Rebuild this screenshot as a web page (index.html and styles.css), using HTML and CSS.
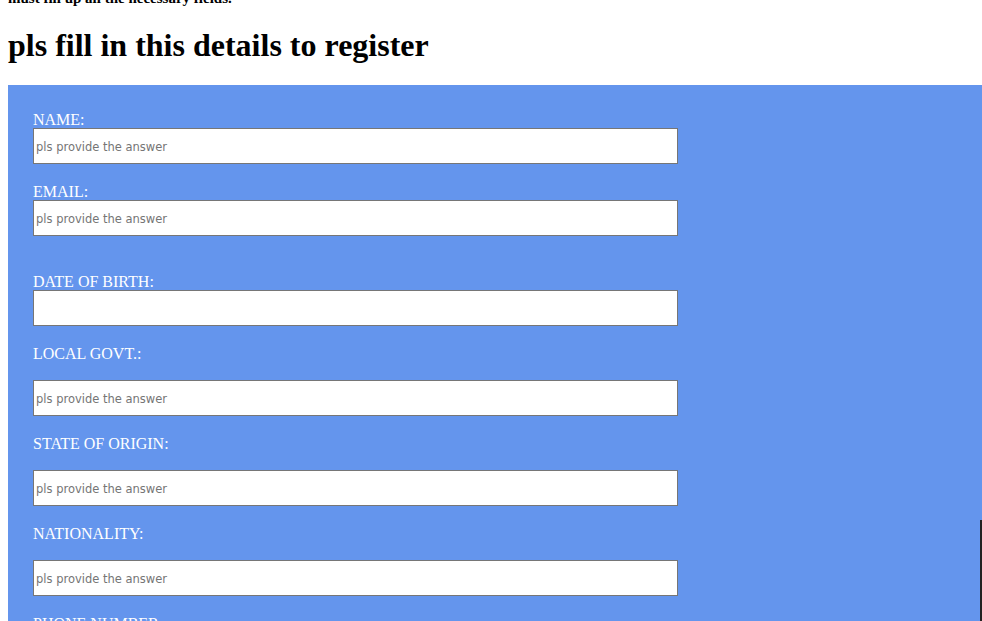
FILE: index.html
```html
<!DOCTYPE html>
<html>
<head>
<meta charset="utf-8">
<link rel="stylesheet" href="styles.css">
</head>
<body>
<p class="note">must fill up all the necessary fields.</p>
<h1 class="title">pls fill in this details to register</h1>
<form class="form">
  <div class="field">
    <label class="label">NAME:</label>
    <input class="input" type="text" placeholder="pls provide the answer">
  </div>
  <div class="field">
    <label class="label">EMAIL:</label>
    <input class="input" type="text" placeholder="pls provide the answer">
  </div>
  <div class="field field-wide">
    <label class="label">DATE OF BIRTH:</label>
    <input class="input" type="text">
  </div>
  <div class="field">
    <label class="label label-gap">LOCAL GOVT.:</label>
    <input class="input" type="text" placeholder="pls provide the answer">
  </div>
  <div class="field">
    <label class="label label-gap">STATE OF ORIGIN:</label>
    <input class="input" type="text" placeholder="pls provide the answer">
  </div>
  <div class="field">
    <label class="label label-gap">NATIONALITY:</label>
    <input class="input" type="text" placeholder="pls provide the answer">
  </div>
  <div class="field">
    <label class="label label-gap">PHONE NUMBER:</label>
    <input class="input" type="text" placeholder="pls provide the answer">
  </div>
</form>
<div class="edge"></div>
</body>
</html>
```
FILE: styles.css
```css
html {
  overflow: hidden;
}
body {
  margin: 0 0 0 8px;
  font-family: "Liberation Serif", "Times New Roman", serif;
  background: #ffffff;
  color: #000;
}
.note {
  margin: -10px 0 0 0;
  font-size: 15px;
  line-height: 17px;
  font-weight: bold;
}
.title {
  margin: 20px 0 21px 0;
  font-size: 32px;
  line-height: 37px;
  font-weight: bold;
}
.form {
  background: #6495ed;
  padding: 25px 25px 40px 25px;
  display: flex;
  flex-direction: column;
  gap: 18px;
}
.field {
  display: flex;
  flex-direction: column;
  align-items: flex-start;
}
.field-wide {
  margin-top: 18px;
}
.label {
  color: #ffffff;
  font-size: 16px;
  line-height: 20px;
  height: 18px;
}
.label-gap {
  margin-bottom: 18px;
}
.input {
  box-sizing: border-box;
  width: 645px;
  height: 36px;
  margin: 0;
  padding: 2px 2px 0 2px;
  border: 1px solid #767676;
  background: #fff;
  font-family: "DejaVu Sans", Verdana, sans-serif;
  font-size: 11.5px;
  outline: none;
}
.input::placeholder {
  color: #757575;
}
.edge {
  position: fixed;
  right: 0;
  top: 520px;
  width: 2px;
  height: 101px;
  background: #222;
}
```
